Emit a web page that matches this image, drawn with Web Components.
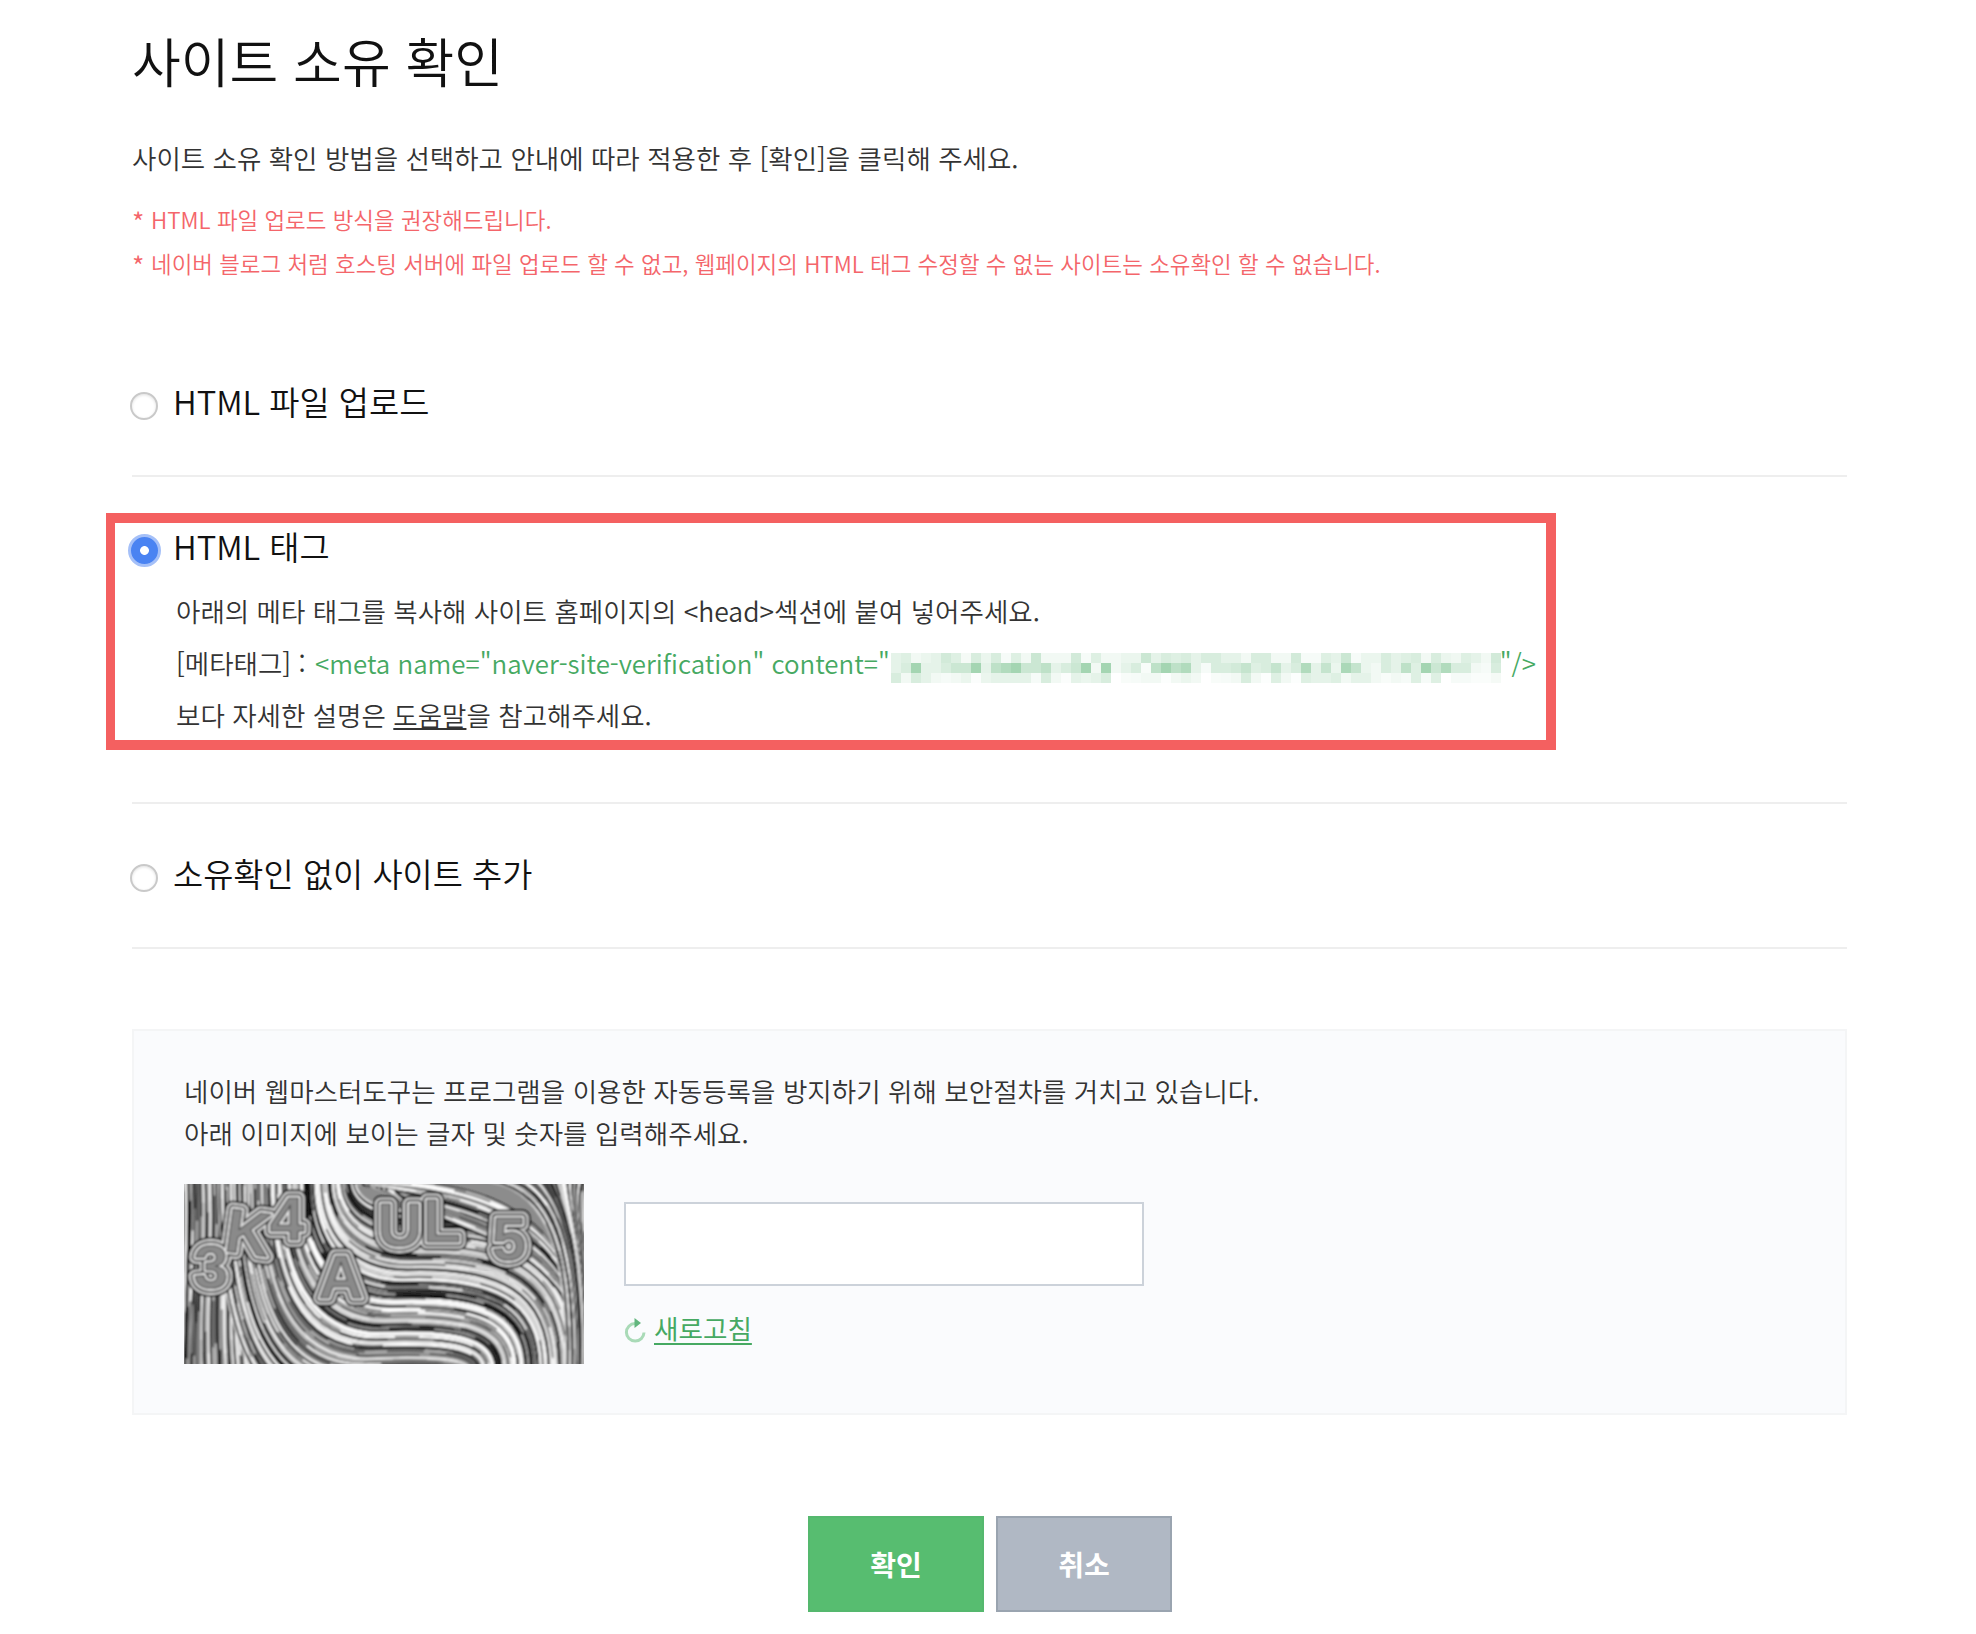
<!DOCTYPE html>
<html lang="ko">
<head>
<meta charset="utf-8">
<title>사이트 소유 확인</title>
<style>
    html, body { margin: 0; background: #fff; }
    body { font-family: "Noto Sans CJK KR", "Noto Sans", sans-serif; color: #333; }
</style>
</head>
<body>
<site-page>
    <page-heading>사이트 소유 확인</page-heading>
    <page-intro>
        사이트 소유 확인 방법을 선택하고 안내에 따라 적용한 후 [확인]을 클릭해 주세요.
        <span slot="note">HTML 파일 업로드 방식을 권장해드립니다.</span>
        <span slot="note">네이버 블로그 처럼 호스팅 서버에 파일 업로드 할 수 없고, 웹페이지의 HTML 태그 수정할 수 없는 사이트는 소유확인 할 수 없습니다.</span>
    </page-intro>
    <verify-option label="HTML 파일 업로드"></verify-option>
    <verify-option label="HTML 태그" checked highlight>
        <option-line>아래의 메타 태그를 복사해 사이트 홈페이지의 &lt;head&gt;섹션에 붙여 넣어주세요.</option-line>
        <option-line>[메타태그] : <meta-snippet></meta-snippet></option-line>
        <option-line>보다 자세한 설명은 <u>도움말</u>을 참고해주세요.</option-line>
    </verify-option>
    <verify-option label="소유확인 없이 사이트 추가"></verify-option>
    <captcha-box>
        네이버 웹마스터도구는 프로그램을 이용한 자동등록을 방지하기 위해 보안절차를 거치고 있습니다.<br>
        아래 이미지에 보이는 글자 및 숫자를 입력해주세요.
    </captcha-box>
    <form-actions>
        <action-button kind="ok">확인</action-button>
        <action-button kind="cancel">취소</action-button>
    </form-actions>
</site-page>

<script>
const defineComponent = ({ title, template, styles, props, onInit }) => {
    const componentTemplate = document.createElement('template');
    componentTemplate.innerHTML = `<style>${styles}</style>${template}`;

    class Component extends HTMLElement {
        static get observedAttributes() {
            return props || [];
        }

        constructor() {
            super();
            this.attachShadow({ mode: 'open' });
            this.shadowRoot.appendChild(componentTemplate.content.cloneNode(true));
        }

        connectedCallback() {
            if (onInit) {
                onInit({ component: this.shadowRoot, host: this });
            }
        }
    }

    customElements.define(title, Component);
};

defineComponent({
    title: 'site-page',
    styles: `:host { display: block; box-sizing: border-box; width: 1976px; height: 1634px; padding: 0 129px 0 132px; overflow: hidden; }`,
    template: `<slot></slot>`,
});

defineComponent({
    title: 'page-heading',
    styles: `:host { display: block; padding-top: 30px; font-size: 53px; line-height: 60px; font-weight: 350; color: #111; white-space: nowrap; }`,
    template: `<slot></slot>`,
});

defineComponent({
    title: 'page-intro',
    styles: `
        :host { display: block; margin-top: 46px; height: 196px; font-size: 26.5px; line-height: 44px; font-weight: 350; color: #333; white-space: nowrap; }
        .notes { margin-top: 17px; font-size: 22.45px; line-height: 44px; color: #f4656a; }
        ::slotted([slot=note]) { display: block; position: relative; padding-left: 19px; }
        ::slotted([slot=note])::before { content: "*"; position: absolute; left: 0; top: 3px; font-size: 27px; }
    `,
    template: `<slot></slot><div class="notes"><slot name="note"></slot></div>`,
});

defineComponent({
    title: 'radio-dot',
    styles: `
        :host { display: block; flex: none; box-sizing: border-box; width: 28px; height: 28px; margin: 12px 0 0 -2px; border-radius: 50%; background: #fff; border: 2px solid #c9c9c9; box-shadow: inset 0 1px 3px rgba(0,0,0,.12); }
        :host([checked]) { width: 33px; height: 33px; margin: 8.5px -2.5px 0 -4.5px; border: 3px solid #a5c0f8; background: radial-gradient(circle, #fff 0 4px, #4a83f2 4.8px); box-shadow: none; }
    `,
    template: ``,
});

defineComponent({
    title: 'verify-option',
    props: ['label', 'checked', 'highlight'],
    styles: `
        :host { display: block; position: relative; box-sizing: border-box; padding: 48px 0 45px; border-bottom: 2px solid #eee; }
        .row { display: flex; align-items: flex-start; gap: 15px; height: 50px; font-size: 32.8px; line-height: 50px; font-weight: 350; color: #111; white-space: nowrap; }
        .row span { position: relative; top: -4px; }
        .body { display: none; margin: 10px 0 16px 44px; }
        :host([checked]) .body { display: block; }
        .mark { display: none; position: absolute; left: -26px; top: 36px; width: 1450px; height: 237px; box-sizing: border-box; border: 10px solid #f46060; border-left-width: 9px; pointer-events: none; }
        :host([highlight]) .mark { display: block; }
    `,
    template: `
        <div class="row"><radio-dot></radio-dot><span class="label"></span></div>
        <div class="body"><slot></slot></div>
        <div class="mark"></div>
    `,
    onInit: ({ component, host }) => {
        component.querySelector('.label').textContent = host.getAttribute('label');
        if (host.hasAttribute('checked')) {
            component.querySelector('radio-dot').setAttribute('checked', '');
        }
    },
});

defineComponent({
    title: 'option-line',
    styles: `:host { display: block; font-size: 26.5px; line-height: 52px; font-weight: 350; color: #333; white-space: nowrap; }`,
    template: `<slot></slot>`,
});

// the token in the reference is mosaiced, so these are the cell strengths read off it
const mosaicRows = [
    [2,2.5,1,1.5,2,3.5,2.5,.8,3,1.5,3,.7,2.5,1,4,1,1,1,3.5,.7,2.5,1,1,1.5,1.5,4,2,3,2.5,3,2,3,3,2,2,1,3,3,1,1,3.5,.7,.7,2.5,2,4,.7,1.5,1.5,3,2,2.5,3,1,3,1.5,1.2,2.5,2,1,3.5],
    [2,3,7,2,2,3,4,4,7,2,5,6,7,4,4,5,2,3,4,7,1,7,1,2,3,.5,5,7,5,6,2,.7,3,3,3.5,4.5,2.5,3,4.5,2,3,6,2,4.5,1.5,6.5,4.5,1.5,1,3,2,5,2.5,7,4,6,3,3,1,.7,3],
    [3,1,3,2,1,.7,1,1.5,.3,1.5,2,2,2,2,.7,3,1,.3,2,1.5,2,3,0,.5,.7,1,1,.2,1,1.5,1,0,.5,.7,1,3,1,.2,2.5,1,.2,2.5,2,2,2.5,1,2,2,1,.5,1,.7,2.5,.7,2.5,0,.7,.7,.4,.4,.8],
];

defineComponent({
    title: 'meta-snippet',
    styles: `
        :host { display: inline; margin-left: 2px; font-size: 25.85px; color: #46a962; }
        svg { display: inline-block; width: 610px; height: 30px; margin: 0 -1px 0 1px; vertical-align: -9px; }
    `,
    template: `&lt;meta name="naver-site-verification" content="<svg viewBox="0 0 610 30" shape-rendering="crispEdges"></svg>"/&gt;`,
    onInit: ({ component }) => {
        let cells = '';
        mosaicRows.forEach((row, y) => {
            row.forEach((strength, x) => {
                cells += `<rect x="${x * 10}" y="${y * 10}" width="10" height="10" fill="#46a962" fill-opacity="${(strength * 0.07).toFixed(3)}"/>`;
            });
        });
        component.querySelector('svg').innerHTML = cells;
    },
});

// streamlines for the captcha: vertical on the left, sweeping right, then falling at the right edge
const buildCaptchaLines = () => {
    let seed = 23;
    const rand = () => {
        seed = (seed * 16807) % 2147483647;
        return seed / 2147483647;
    };
    const colors = ['#000', '#f4f4f4', '#555', '#1a1a1a', '#fff', '#999', '#2a2a2a', '#ddd'];
    let lines = '';
    const stroke = (d) => {
        const color = colors[Math.floor(rand() * colors.length)];
        const width = (1.3 + rand() * 1.7).toFixed(1);
        lines += `<path d="${d}" stroke="${color}" stroke-width="${width}"/>`;
        // a broken second pass, so the lines read as streaks and not as clean bands
        const streak = rand() < 0.5 ? '#000' : '#fff';
        const dash = `${Math.round(20 + rand() * 60)} ${Math.round(25 + rand() * 70)}`;
        lines += `<path d="${d}" stroke="${streak}" stroke-opacity="0.6" stroke-linecap="round" stroke-width="${(1 + rand() * 1).toFixed(1)}" stroke-dasharray="${dash}" stroke-dashoffset="${Math.round(rand() * 80)}"/>`;
    };
    // left, nearly vertical
    for (let x = -3; x < 70; x += 2.2) {
        const w = 2 + rand() * 3;
        stroke(`M${x} -5C${x + w} 50 ${x - w} 120 ${x + (x - 30) * 0.12} 185`);
    }
    // main sweep, extended past both ends so that the corners fill
    const total = 66;
    for (let i = -18; i <= total + 6; i++) {
        const k = i / total;
        const sx = 62 + 100 * k;
        const midY = 196 - 152 * k;
        const ex = 262 + 136 * k;
        const mx = 170 + 70 * k;
        const wave = 7 * Math.sin(k * 3.1);
        stroke(`M${sx} -5C${sx} ${midY * 0.62} ${sx + 30} ${midY + wave} ${mx} ${midY + wave}C${mx + (ex - mx) * 0.65} ${midY + wave - 3} ${ex} ${midY + (185 - midY) * 0.25} ${ex} 185`);
    }
    // top right
    for (let y = -10; y < 46; y += 2.4) {
        stroke(`M${166 + y} ${y * 0.2 - 2}C250 ${y + 4} ${402 - y * 0.2} ${y + 4} 403 185`);
    }
    for (let d = 0; d < 120; d += 2.6) {
        stroke(`M${290 + d} -5C${345 + d * 0.4} ${d * 0.2} ${385 + d * 0.2} ${30 + d * 0.4} ${382 + d * 0.2} 185`);
    }
    return lines;
};

defineComponent({
    title: 'captcha-image',
    styles: `
        :host { display: block; flex: none; width: 400px; height: 180px; background: #8c8c8c; overflow: hidden; }
        svg { display: block; width: 400px; height: 180px; }
        text { font-family: "Liberation Sans", sans-serif; font-weight: 700; font-size: 62px; text-anchor: middle; }
    `,
    template: `
        <svg viewBox="0 0 400 180" aria-hidden="true">
            <defs>
                <filter id="soft" x="0" y="0" width="100%" height="100%"><feGaussianBlur stdDeviation="0.85"/></filter>
                <g id="letters" stroke-linejoin="round">
                    <text x="27" y="104" font-size="42">3</text>
                    <text x="64" y="70" transform="rotate(8 64 50)" font-size="52">K</text>
                    <text x="103" y="56" font-size="62">4</text>
                    <text x="157" y="114" font-size="64">A</text>
                    <text x="216" y="62" font-size="60">U</text>
                    <text x="258" y="58" font-size="54">L</text>
                    <text x="325" y="76" font-size="70">5</text>
                </g>
            </defs>
            <g filter="url(#soft)">
                <g class="lines" fill="none"></g>
                <use href="#letters" fill="#000" stroke="#111" stroke-width="17"/>
                <use href="#letters" fill="#ddd" stroke="#ddd" stroke-width="13"/>
                <use href="#letters" fill="#333" stroke="#333" stroke-width="9"/>
                <use href="#letters" fill="#e8e8e8" stroke="#e8e8e8" stroke-width="5"/>
                <use href="#letters" fill="#8a8a8a" stroke="#444" stroke-width="1.2"/>
            </g>
        </svg>
    `,
    onInit: ({ component }) => {
        component.querySelector('.lines').innerHTML = buildCaptchaLines();
    },
});

defineComponent({
    title: 'refresh-link',
    styles: `
        :host { display: flex; align-items: center; gap: 8px; font-size: 26.6px; line-height: 30px; font-weight: 400; color: #46a962; white-space: nowrap; }
        svg { width: 22px; height: 27px; flex: none; margin-top: 4px; }
        a { color: inherit; text-decoration: underline; text-underline-offset: 4px; text-decoration-thickness: 2px; }
    `,
    template: `
        <svg viewBox="0 0 22 27" fill="none">
            <path d="M11 7.5A8.8 8.8 0 1 0 20 16.5" stroke="#a9dab7" stroke-width="3"/>
            <path d="M10.5 2L17 7L10.5 12Z" fill="#62b67e"/>
        </svg>
        <a href="#">새로고침</a>
    `,
});

defineComponent({
    title: 'captcha-box',
    styles: `
        :host { display: block; box-sizing: border-box; width: 1715px; height: 386px; margin-top: 80px; padding: 38.5px 50px 0; background: #fafbfd; border: 2px solid #f4f5f6; font-size: 26.55px; line-height: 42px; font-weight: 350; color: #333; white-space: nowrap; }
        .row { display: flex; gap: 40px; margin-top: 30.5px; }
        .entry { display: flex; flex-direction: column; gap: 26px; padding-top: 18px; }
        input { display: block; box-sizing: border-box; width: 520px; height: 84px; background: #fff; border: 2px solid #ccd2da; border-radius: 0; outline: none; }
    `,
    template: `
        <slot></slot>
        <div class="row">
            <captcha-image></captcha-image>
            <div class="entry">
                <input type="text">
                <refresh-link></refresh-link>
            </div>
        </div>
    `,
});

defineComponent({
    title: 'form-actions',
    styles: `:host { display: flex; justify-content: center; gap: 12px; margin: 101px 0 0 1px; }`,
    template: `<slot></slot>`,
});

defineComponent({
    title: 'action-button',
    props: ['kind'],
    styles: `
        :host { display: block; }
        button { display: block; box-sizing: border-box; width: 176px; height: 96px; padding: 0; font: 700 28px "Noto Sans CJK KR", sans-serif; color: #fff; border: 2px solid #55b86e; background: #57bd70; border-radius: 0; }
        :host([kind=cancel]) button { background: #b0b8c4; border-color: #9aa4b0; }
    `,
    template: `<button type="button"><slot></slot></button>`,
});
</script>
</body>
</html>
